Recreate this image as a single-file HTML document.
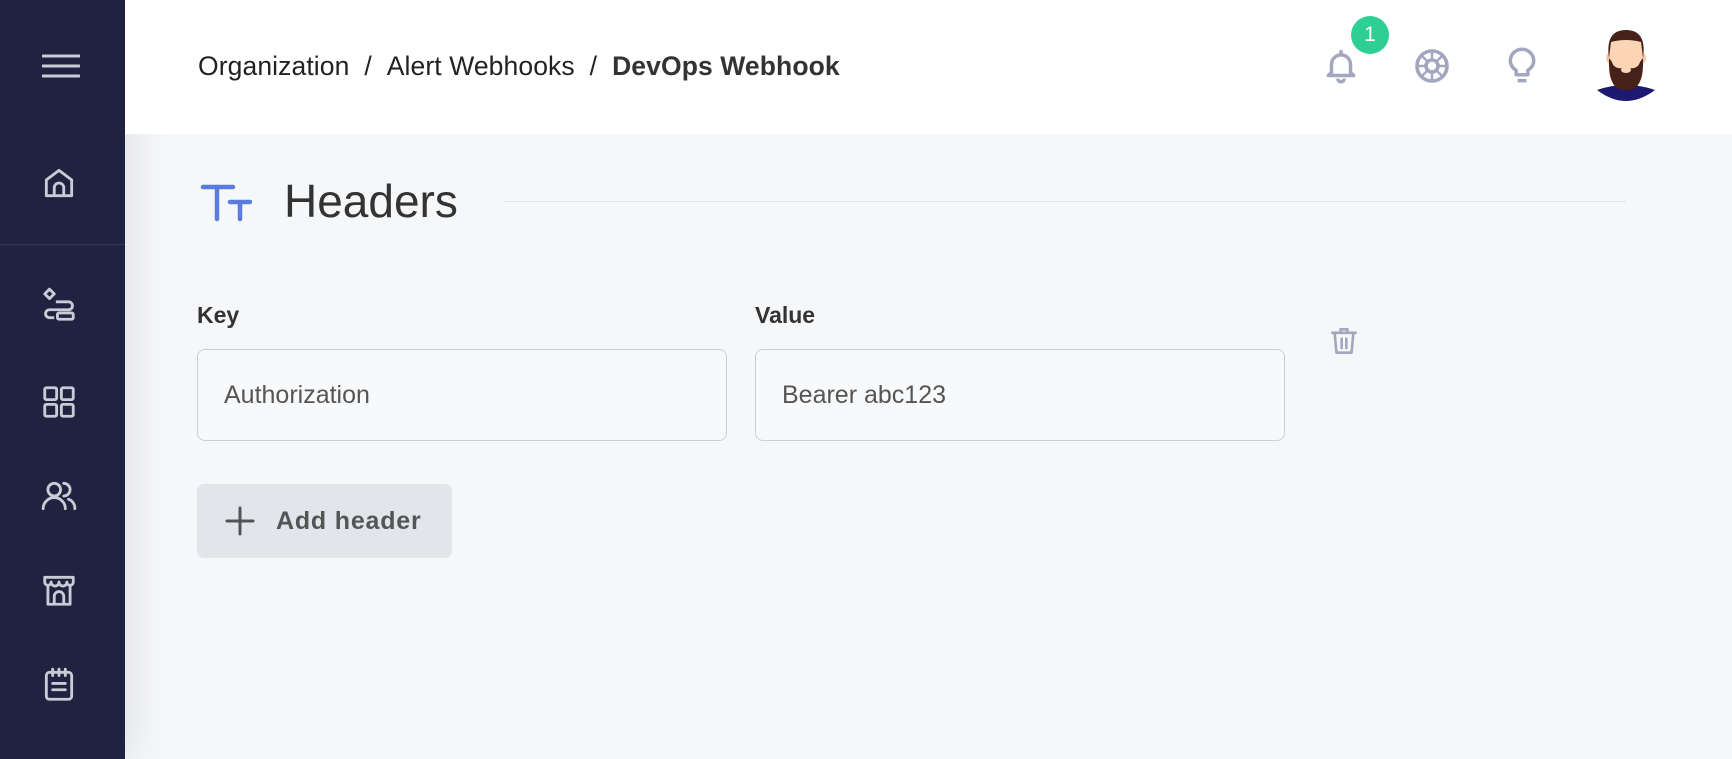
<!DOCTYPE html>
<html><head><style>
*{margin:0;padding:0;box-sizing:border-box}
body{width:1732px;height:759px;overflow:hidden;background:#f6f7f9;font-family:"Liberation Sans",sans-serif;position:relative}
.side{position:absolute;left:0;top:0;width:125px;height:759px;background:#1f2340;box-shadow:6px 0 40px rgba(0,0,0,.10)}
.side svg{position:absolute;left:42px}
.div{position:absolute;left:0;top:244px;width:125px;height:1px;background:#33385a}
.top{position:absolute;left:125px;top:0;right:0;height:134px;background:#fff}
.bc{position:absolute;left:198px;top:51px;font-size:26.5px;color:#222;letter-spacing:.1px}
.bc b{color:#333}
.ic{position:absolute}
.badge{position:absolute;left:1351px;top:16px;width:38px;height:38px;border-radius:50%;background:#2ecf94;color:#fff;font-size:21px;text-align:center;line-height:38px}
h1{position:absolute;left:284px;top:174px;font-size:46px;font-weight:400;color:#333}
.line{position:absolute;left:503px;top:201px;width:1123px;height:1px;background:#dfe2e7}
.lbl{position:absolute;top:302px;font-size:23px;font-weight:bold;color:#333}
.inp{position:absolute;top:349px;width:530px;height:92px;border:1px solid #c8d0d9;border-radius:8px;background:#f8f9fb;font-size:25px;color:#555;padding-left:26px;line-height:90px}
.btn{position:absolute;left:197px;top:484px;width:255px;height:74px;background:#e2e6ea;border-radius:7px;font-size:25px;font-weight:bold;color:#555;letter-spacing:.8px}
</style></head><body>
<div class="side">
<svg style="top:53px" width="38" height="26" viewBox="0 0 38 26"><path d="M1 3h36M1 13h36M1 23h36" stroke="#c9cbd6" stroke-width="3" stroke-linecap="round"/></svg>
<svg style="top:164px;left:40px" width="38" height="38" viewBox="0 0 24 24" fill="none" stroke="#c9cbd6" stroke-width="1.8" stroke-linejoin="round"><path d="M4 20V10l8-6 8 6v10zM9 20v-5a3 3 0 0 1 6 0v5"/></svg>
<div class="div"></div>
<svg style="top:286px;left:40px" width="38" height="38" viewBox="0 0 24 24" fill="none" stroke="#c9cbd6" stroke-width="1.8" stroke-linejoin="round"><path d="M6 2l3 3-3 3-3-3zM10 10h8a2.5 2.5 0 0 1 0 5H6a2.5 2.5 0 0 0 0 5h3"/><rect x="11" y="17" width="10" height="4" rx="1"/></svg>
<svg style="top:383px;left:40px" width="38" height="38" viewBox="0 0 24 24" fill="none" stroke="#c9cbd6" stroke-width="1.8"><rect x="3" y="3" width="7.5" height="7.5" rx="1"/><rect x="13.5" y="3" width="7.5" height="7.5" rx="1"/><rect x="3" y="13.5" width="7.5" height="7.5" rx="1"/><rect x="13.5" y="13.5" width="7.5" height="7.5" rx="1"/></svg>
<svg style="top:477px;left:39px" width="40" height="38" viewBox="0 0 24 24" fill="none" stroke="#c9cbd6" stroke-width="1.8" stroke-linecap="round"><circle cx="9" cy="8" r="4"/><path d="M2 20a7 7 0 0 1 14 0M15 4a4 4 0 0 1 0 8M18 14a6 6 0 0 1 4 6"/></svg>
<svg style="top:571px;left:40px" width="38" height="38" viewBox="0 0 24 24" fill="none" stroke="#c9cbd6" stroke-width="1.8" stroke-linejoin="round"><path d="M3 4h18v3a2 2 0 0 1-4 0 2 2 0 0 1-5 0 2 2 0 0 1-5 0 2 2 0 0 1-4 0zM5 9v12h14V9M9 21v-5a3 3 0 0 1 6 0v5"/></svg>
<svg style="top:666px;left:40px" width="38" height="38" viewBox="0 0 24 24" fill="none" stroke="#c9cbd6" stroke-width="1.8" stroke-linecap="round"><rect x="4" y="4" width="16" height="17" rx="2"/><path d="M8 2v4M12 2v4M16 2v4M8 11h8M8 15h8"/></svg>
</div>
<div class="top"></div>
<div class="bc">Organization &nbsp;/ &nbsp;Alert Webhooks &nbsp;/ &nbsp;<b>DevOps Webhook</b></div>
<svg class="ic" style="left:1322px;top:46px" width="38" height="40" viewBox="0 0 24 24" fill="none" stroke="#a3a6bf" stroke-width="2.2" stroke-linejoin="round"><path d="M12 2v2M6 16V11a6 6 0 0 1 12 0v5l2 2H4zM10 20a2 2 0 0 0 4 0"/></svg>
<div class="badge">1</div>
<svg class="ic" style="left:1414px;top:48px" width="36" height="36" viewBox="0 0 24 24" fill="none" stroke="#a3a6bf" stroke-width="2.4"><circle cx="12" cy="12" r="10"/><circle cx="12" cy="12" r="4"/><path d="M12 2v6M12 16v6M2 12h6M16 12h6M5 5l4 4M15 15l4 4M19 5l-4 4M9 15l-4 4" stroke-width="1.6"/></svg>
<svg class="ic" style="left:1507px;top:47px" width="30" height="38" viewBox="0 0 20 26" fill="none" stroke="#a3a6bf" stroke-width="2.4" stroke-linejoin="round"><path d="M6 19v-3C3 14 2 12 2 9.5a8 8 0 0 1 16 0c0 2.5-1 4.5-4 6.5v3zM7 23h6"/></svg>
<svg class="ic" style="left:1595px;top:28px" width="62" height="76" viewBox="0 0 62 76"><path d="M2 62 Q31 52 60 62 Q31 84 2 62z" fill="#1d1870"/><ellipse cx="14" cy="30" rx="3" ry="5" fill="#f6c7a3"/><ellipse cx="48" cy="30" rx="3" ry="5" fill="#f6c7a3"/><rect x="14" y="6" width="34" height="52" rx="13" fill="#fbd5b5"/><path d="M14 30 Q13 64 31 62 Q49 64 48 30 L45 34 Q43 42 31 40 Q19 42 17 34z" fill="#45211a"/><ellipse cx="31" cy="42" rx="5" ry="3" fill="#fbd5b5"/><path d="M14 30 Q10 2 31 2 Q52 2 48 30 L46 14 Q31 10 16 14z" fill="#45211a"/></svg>
<svg class="ic" style="left:200px;top:184px" width="52" height="40" viewBox="0 0 52 40" stroke="#5b7be0" stroke-width="4.5" stroke-linecap="round" fill="none"><path d="M3 3h30M17 3v32M30 18h20M40 18v17"/></svg>
<h1>Headers</h1>
<div class="line"></div>
<div class="lbl" style="left:197px">Key</div>
<div class="lbl" style="left:755px">Value</div>
<div class="inp" style="left:197px">Authorization</div>
<div class="inp" style="left:755px">Bearer abc123</div>
<svg class="ic" style="left:1330px;top:325px" width="28" height="32" viewBox="0 0 24 26" fill="none" stroke="#a3a6bf" stroke-width="2.2" stroke-linecap="round" stroke-linejoin="round"><path d="M2 6h20M9 6V3h6v3M4 6l1.5 17h13L20 6M10 11v8M14 11v8"/></svg>
<div class="btn"><svg style="position:absolute;left:28px;top:22px" width="30" height="30" viewBox="0 0 30 30" stroke="#555" stroke-width="3" stroke-linecap="round"><path d="M15 2v26M2 15h26"/></svg><span style="position:absolute;left:79px;top:23px">Add header</span></div>
</body></html>
